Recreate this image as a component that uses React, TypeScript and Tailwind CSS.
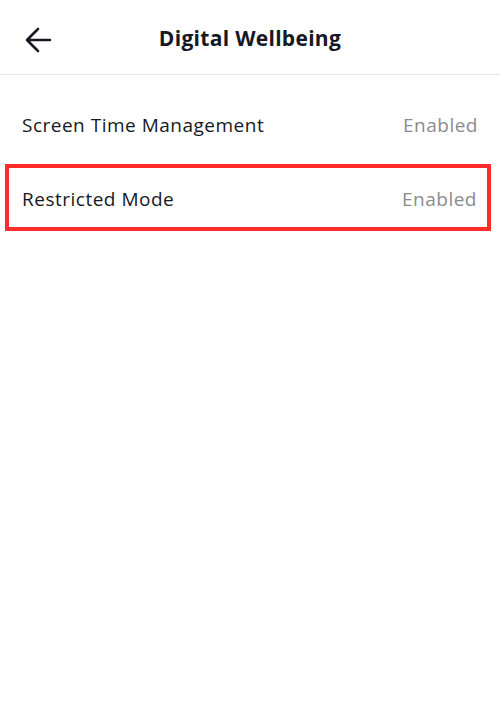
export default function App() {
    const font = { fontFamily: "'Open Sans', 'Liberation Sans', sans-serif" };

    return (
        <div className="w-[500px] h-[711px] bg-white text-[#161823]" style={font}>
            <div className="relative flex flex-row items-center justify-center h-[75px] pt-[3px] border-b border-[#e3e3e4]">
                <button className="absolute left-[22px] top-[24px] w-[32px] h-[32px] flex items-center justify-center">
                    <svg width="28" height="28" viewBox="0 0 28 28" fill="none">
                        <path
                            d="M26 14H4M14 3L3 14L14 25"
                            stroke="#161823"
                            strokeWidth="2.6"
                            strokeLinecap="round"
                            strokeLinejoin="round"
                        />
                    </svg>
                </button>
                <div className="text-[21px] font-bold tracking-[0.3px]">Digital Wellbeing</div>
            </div>

            <div className="flex flex-col pt-[13px]">
                <div className="flex flex-row items-center justify-between h-[74px] px-[22px] text-[19px] tracking-[0.5px]">
                    <div>Screen Time Management</div>
                    <div className="text-[#8a8b91]">Enabled</div>
                </div>
                <div className="flex flex-row items-center justify-between h-[67px] mt-[2px] ml-[5px] mr-[9px] pl-[13px] pr-[10px] pt-[3px] border-4 border-[#ff2b2b] text-[19px] tracking-[0.5px]">
                    <div>Restricted Mode</div>
                    <div className="text-[#8a8b91]">Enabled</div>
                </div>
            </div>
        </div>
    );
}
